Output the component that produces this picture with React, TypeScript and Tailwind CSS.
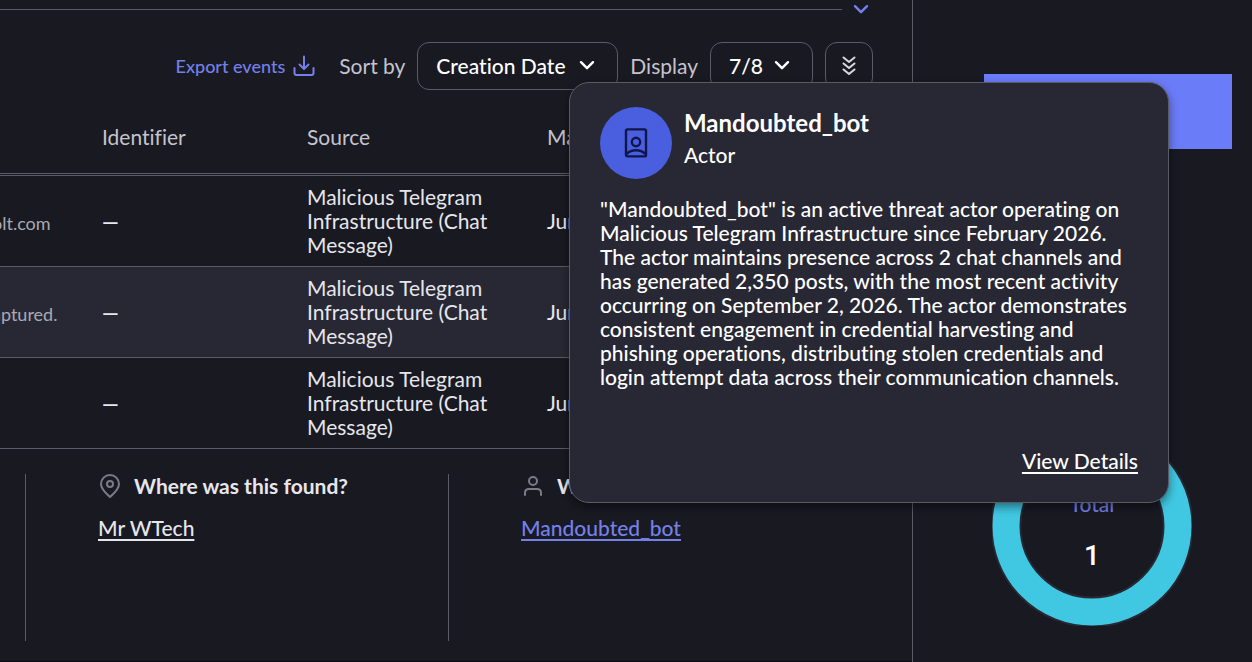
import { ReactNode } from 'react'

const rows = [
  { url: 'olt.com', active: false },
  { url: 'aptured.', active: true },
  { url: '', active: false },
]

function Chevron({ className = '' }: { className?: string }) {
  return (
    <svg viewBox="0 0 22 22" fill="none" stroke="currentColor" strokeWidth="2.4" strokeLinecap="round" strokeLinejoin="round" className={`w-[22px] h-[22px] ${className}`}>
      <path d="M5 8.200l6 6 6-6" />
    </svg>
  )
}

interface SelectBoxProps {
  id: string
  label: string
  value: string
  className: string
}

function SelectBox({ id, label, value, className }: SelectBoxProps) {
  return (
    <div className="flex items-center gap-3">
      <label htmlFor={id} className="text-[21px] text-[#c4c4cd]">{label}</label>
      <div className={`relative ${className}`}>
        <select id={id} className="appearance-none w-full h-12 pl-[18px] pr-10 rounded-xl border border-[#5b5b67] bg-[#191922] text-[21px] font-medium text-white">
          <option>{value}</option>
        </select>
        <Chevron className="absolute right-5 top-3 text-white pointer-events-none" />
      </div>
    </div>
  )
}

interface DetailProps {
  icon: ReactNode
  title: string
  children: ReactNode
}

function Detail({ icon, title, children }: DetailProps) {
  return (
    <section className="h-[167px] border-l border-[#5b5b67] pl-[72px]">
      <div className="flex items-center gap-3 h-6">
        {icon}
        <h3 className="text-[21px] leading-6 font-bold text-[#e6e6ec]">{title}</h3>
      </div>
      <div className="mt-[18px] h-6 text-[21px] leading-6 font-medium">{children}</div>
    </section>
  )
}

function ActorPopover() {
  return (
    <div role="dialog" aria-label="Mandoubted_bot" className="absolute top-[82px] right-[83px] w-[600px] px-[30px] pt-6 pb-[29px] rounded-[20px] border border-[#5b5b67] bg-[#282834] text-[21px] leading-6 font-medium text-white shadow-[0_4px_10px_rgba(0,0,0,0.45)]">
      <div className="flex gap-3">
        <div className="flex items-center justify-center w-[72px] h-[72px] rounded-full bg-[#495fe0]">
          <svg viewBox="0 0 24 32" fill="none" stroke="#10154a" strokeWidth="2.4" className="w-6 h-8">
            <rect x="2" y="2.4" width="20" height="27" rx="1.5" />
            <circle cx="12" cy="15" r="4.2" />
            <path d="M2.5 27c2.500-2.500 5.500-3.800 9.500-3.800s7 1.300 9.500 3.800" />
          </svg>
        </div>
        <div>
          <h2 className="text-2xl leading-8 font-bold">Mandoubted_bot</h2>
          <p className="leading-8">Actor</p>
        </div>
      </div>
      <p className="mt-[18px]">
        "Mandoubted_bot" is an active threat actor operating on Malicious Telegram Infrastructure since February 2026. The actor maintains presence across 2 chat channels and has generated 2,350 posts, with the most recent activity occurring on September 2, 2026. The actor demonstrates consistent engagement in credential harvesting and phishing operations, distributing stolen credentials and login attempt data across their communication channels.
      </p>
      <div className="flex justify-end mt-[60px]">
        <a href="#details" className="underline underline-offset-3 decoration-2">View Details</a>
      </div>
    </div>
  )
}

export default function App() {
  return (
    <div className="relative flex min-h-screen overflow-hidden bg-[#191922] font-['Lato',sans-serif] [font-variant-ligatures:none]">
      <main className="flex-1 min-w-0 border-r border-[#5b5b67]">
        <div className="flex items-center gap-2 h-[18px] pr-10">
          <hr className="flex-1 border-[#5b5b67]" />
          <button aria-label="Expand" className="text-[#7480f0]">
            <Chevron />
          </button>
        </div>

        <div className="flex items-center justify-end gap-3 mt-6 pr-[39px]">
          <button className="flex items-center gap-2 mr-3 text-[18px] font-medium text-[#7480e8]">
            Export events
            <svg viewBox="0 0 22 22" fill="none" stroke="currentColor" strokeWidth="2" strokeLinecap="round" strokeLinejoin="round" className="w-[22px] h-[22px]">
              <path d="M11 1.500v12M6.500 9.500l4.500 4.500 4.500-4.500M1.500 13v5q0 2 2 2h15q2 0 2-2v-5" />
            </svg>
          </button>
          <SelectBox id="sort" label="Sort by" value="Creation Date" className="w-[201px]" />
          <SelectBox id="display" label="Display" value="7/8" className="w-[103px]" />
          <button aria-label="Collapse all" className="flex items-center justify-center w-12 h-12 rounded-xl border border-[#5b5b67] text-[#d8d8e0]">
            <svg viewBox="0 0 14 20" fill="none" stroke="currentColor" strokeWidth="2" strokeLinecap="round" strokeLinejoin="round" className="w-[14px] h-5">
              <path d="M1.500 1.500l5.500 4.500 5.500-4.500M1.500 7.500l5.500 4.500 5.500-4.500M1.500 13.500l5.500 4.500 5.500-4.500" />
            </svg>
          </button>
        </div>

        <table className="w-full table-fixed border-separate border-spacing-0 text-left text-[21px] leading-6">
          <thead>
            <tr className="h-[86px] text-[#c4c4cd]">
              <th className="w-[102px] border-b-[3px] border-double border-[#5b5b67]"></th>
              <th className="w-[205px] pt-[18px] pb-2 font-normal border-b-[3px] border-double border-[#5b5b67]">Identifier</th>
              <th className="w-[240px] pt-[18px] pb-2 font-normal border-b-[3px] border-double border-[#5b5b67]">Source</th>
              <th className="pt-[18px] pb-2 font-normal border-b-[3px] border-double border-[#5b5b67]">Match</th>
            </tr>
          </thead>
          <tbody className="text-[#e6e6ec]">
            {rows.map((row, i) => (
              <tr key={i} className={row.active ? 'h-[91px] bg-[#282834]' : 'h-[91px]'}>
                <td className="border-b border-[#5b5b67] text-[18px] text-[#a9a9b4]">
                  <span className="block -ml-2 pt-1">{row.url}</span>
                </td>
                <td className="border-b border-[#5b5b67] font-bold">—</td>
                <td className="border-b border-[#5b5b67] pr-10">Malicious Telegram Infrastructure (Chat Message)</td>
                <td className="border-b border-[#5b5b67]">Jun</td>
              </tr>
            ))}
          </tbody>
        </table>

        <div className="grid grid-cols-2 pt-[25px] pb-5 pl-[25px] pr-[41px] border-b border-[#0d0714]">
          <Detail
            title="Where was this found?"
            icon={
              <svg viewBox="0 0 24 24" fill="none" stroke="#7b7b87" strokeWidth="2" strokeLinejoin="round" className="w-6 h-6">
                <path d="M12 23C8 19.500 3 15.500 3 10a9 9 0 0 1 18 0c0 5.500-5 9.500-9 13z" />
                <circle cx="12" cy="10" r="3" />
              </svg>
            }
          >
            <a href="#channel" className="text-[#e6e6ec] underline underline-offset-3 decoration-2">Mr WTech</a>
          </Detail>
          <Detail
            title="Who"
            icon={
              <svg viewBox="0 0 24 24" fill="none" stroke="#7b7b87" strokeWidth="2" strokeLinecap="round" className="w-6 h-6">
                <circle cx="12" cy="7" r="4" />
                <path d="M4 21v-2q0-4 4-4h8q4 0 4 4v2" />
              </svg>
            }
          >
            <a href="#actor" className="text-[#7480e8] underline underline-offset-3 decoration-2">Mandoubted_bot</a>
          </Detail>
        </div>
      </main>

      <aside className="w-[339px] pl-[71px] pr-5 pt-[74px]">
        <button aria-label="Open case" className="block w-full h-[75px] bg-[#6b7cf8]"></button>
        <div className="grid w-[200px] h-[200px] mt-[277px] ml-2">
          <svg viewBox="0 0 200 200" fill="none" className="col-start-1 row-start-1">
            <circle cx="100" cy="100" r="86" stroke="#282834" strokeWidth="31" />
            <circle cx="100" cy="100" r="86" stroke="#40c8e2" strokeWidth="27" />
          </svg>
          <div className="col-start-1 row-start-1 flex flex-col items-center gap-5 pt-[62px]">
            <span className="text-[21px] leading-8 font-medium text-[#7480e8]">Total</span>
            <span className="font-['Roboto',sans-serif] text-[28px] leading-8 font-medium text-white">1</span>
          </div>
        </div>
      </aside>

      <ActorPopover />
    </div>
  )
}
